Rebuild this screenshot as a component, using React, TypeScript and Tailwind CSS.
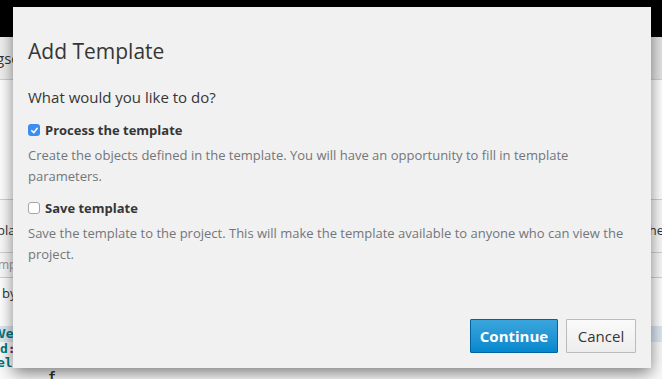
import React from "react";

export default function App() {
  return (
    <div
      className="relative w-[662px] h-[379px] overflow-hidden bg-[#fafafa]"
      style={{ fontFamily: '"Open Sans", "Noto Sans", sans-serif' }}
    >
      {/* Background page */}
      <div className="flex flex-col w-full h-full">
        <div className="h-[37px] bg-black shrink-0" />
        <div className="h-[43px] shrink-0 bg-gradient-to-r from-[#f0f0f0] to-[#e4e4e4] border-b border-[#d1d1d1] flex items-center justify-between">
          <span className="text-[15px] text-[#333] -ml-[4px]">gsc</span>
        </div>
        <div className="h-[120px] shrink-0 bg-white border-b border-[#d1d1d1]" />
        <div className="h-[53px] shrink-0 bg-[#fafafa] border-b border-[#d1d1d1] flex items-center justify-between pt-[10px]">
          <span className="text-[13px] text-[#333] -ml-[3px]">pla</span>
          <span className="text-[13px] text-[#333] -mr-[2px]">he</span>
        </div>
        <div className="h-[25px] shrink-0 bg-[#fafafa] border-b border-[#d1d1d1] flex items-center">
          <span className="text-[12px] text-[#999] -ml-[2px]">mp</span>
        </div>
        <div className="h-[48px] shrink-0 bg-white pt-[6px]">
          <span className="block text-[13px] leading-[18px] text-[#333] ml-[2px]">by</span>
        </div>
        <div
          className="flex flex-col text-[13px] leading-[14px] text-[#00777b] font-bold"
          style={{ fontFamily: '"DejaVu Sans Mono", monospace' }}
        >
          <div className="h-[16px] bg-[#dde8f3] flex items-center -ml-[2px]">Ve</div>
          <div className="h-[14px] flex items-center">
            d<span className="text-[#8a1a6a]">:</span>
          </div>
          <div className="h-[14px] flex items-center -ml-[3px]">
            els<span className="text-[#8a1a6a]">.</span>
          </div>
          <div className="h-[14px] flex items-center text-[#333] pl-[48px]">
            f
          </div>
        </div>
      </div>

      {/* Modal */}
      <div className="absolute left-[13px] top-[7px] w-[638px] h-[361px] bg-[#f1f1f1] shadow-[0_5px_15px_rgba(0,0,0,0.5)] flex flex-col px-[15px]">
        <h1 className="mt-[32px] text-[21px] leading-[24px] text-[#363636] font-normal">
          Add Template
        </h1>
        <p className="mt-[24px] text-[15px] leading-[20px] text-[#363636]">
          What would you like to do?
        </p>
        <label className="mt-[13px] flex items-center gap-[5px] text-[13px] leading-[20px] font-bold text-[#363636]">
          <span className="w-[12px] h-[12px] rounded-[3px] bg-[#3b8ef0] flex items-center justify-center">
            <svg width="9" height="9" viewBox="0 0 10 10">
              <path
                d="M2 5.2 L4.2 7.4 L8 2.6"
                fill="none"
                stroke="white"
                strokeWidth="1.7"
                strokeLinecap="round"
                strokeLinejoin="round"
              />
            </svg>
          </span>
          Process the template
        </label>
        <p className="mt-[5px] text-[13px] leading-[21px] text-[#72767b]">
          Create the objects defined in the template. You will have an opportunity to fill in template
          parameters.
        </p>
        <label className="mt-[11px] flex items-center gap-[5px] text-[13px] leading-[20px] font-bold text-[#363636]">
          <span className="w-[12px] h-[12px] rounded-[3px] bg-white border border-[#a5a5a5]" />
          Save template
        </label>
        <p className="mt-[5px] text-[13px] leading-[21px] text-[#72767b]">
          Save the template to the project. This will make the template available to anyone who can view the
          project.
        </p>
        <div className="mt-auto mb-[15px] flex justify-end gap-[8px]">
          <button className="h-[34px] w-[88px] border border-[#00659c] bg-gradient-to-b from-[#39a5dc] to-[#0088ce] text-white text-[15px] font-bold rounded-[1px]">
            Continue
          </button>
          <button className="h-[34px] w-[70px] border border-[#bbbbbb] bg-gradient-to-b from-[#fafafa] to-[#ededed] text-[#363636] text-[15px] rounded-[1px]">
            Cancel
          </button>
        </div>
      </div>
    </div>
  );
}
